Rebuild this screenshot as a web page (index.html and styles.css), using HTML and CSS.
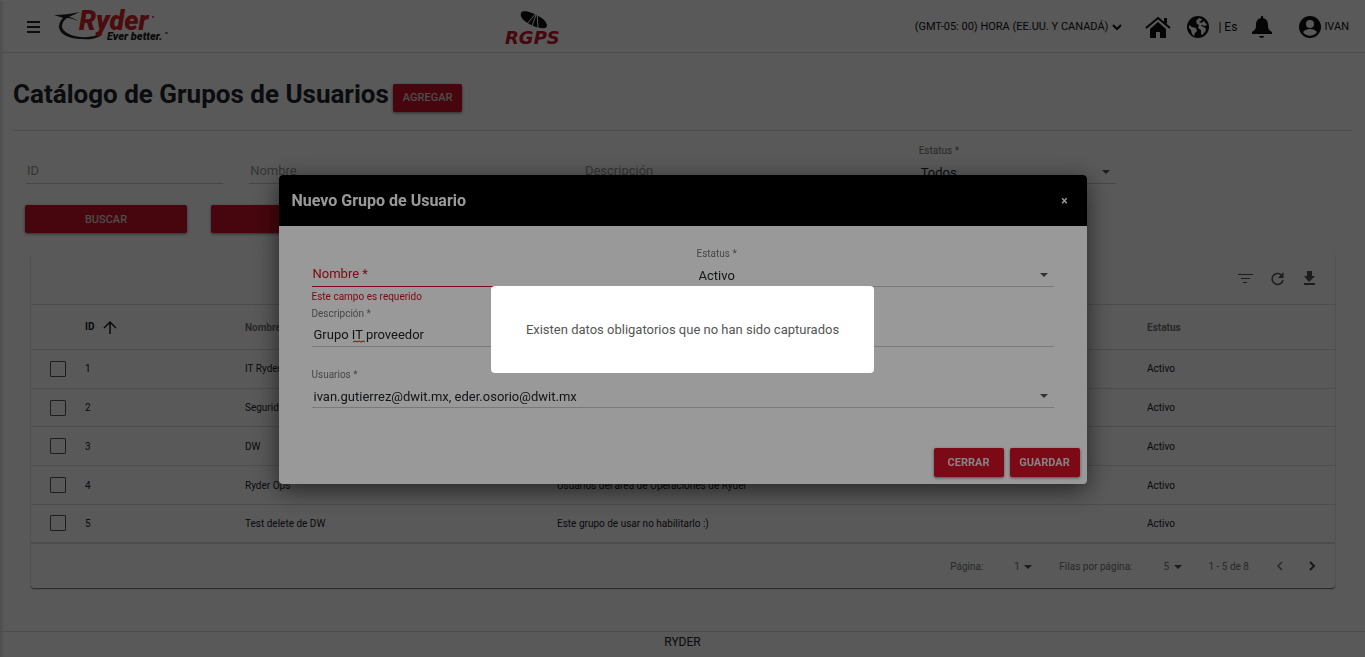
FILE: index.html
```
<!DOCTYPE html>
<html lang="es">
	<head>
		<meta charset="utf-8">
		<meta name="viewport" content="width=device-width, initial-scale=1">
		<title>RGPS - Grupos de Usuarios</title>
		<link rel="stylesheet" href="styles.css">
	</head>

	<body>
		<header class="topbar">
			<div class="brand">
				<button class="icon-btn" aria-label="Menú">
					<svg width="14" height="12" viewBox="0 0 14 12"><path d="M0 1h13M0 6h13M0 11h13" stroke="currentColor" stroke-width="2"/></svg>
				</button>
				<a href="#" aria-label="Ryder">
					<svg width="116" height="34" viewBox="0 0 116 34">
						<path d="M0 5C9 5 17 4 26 2c-5 2-9 4-11 5 4 1 7 2 9 4-4-2-8-3-11-3C6 13 6 20 15 24c8 4 20 4 29 1 2-1 4-2 4-1-2 4-12 6-20 5C9 29-1 19 9 8 7 7 3 6 0 5z" fill="#222"/>
						<text class="logo-ryder" x="25" y="20">Ryder</text>
						<circle cx="99" cy="7" r="1" fill="#d8232a"/>
						<text class="logo-tag" x="53" y="30">Ever better.</text>
						<path d="M111 23h3" stroke="#222"/>
					</svg>
				</a>
			</div>
			<a class="product" href="#">
				<svg width="60" height="36" viewBox="0 0 60 36">
					<path d="M16 4c1-4 12-1 19 4 7 4 9 10 5 11-5 1-13-2-19-6-4-3-6-6-5-9z" fill="#111"/>
					<path d="M32 3L22 15M32 3l-5 14M32 3l1 16" stroke="#fff" fill="none"/>
					<text class="logo-rgps" x="0" y="35">RGPS</text>
				</svg>
			</a>
			<nav class="tools">
				<button class="zone">(GMT-05: 00) HORA (EE.UU. Y CANADÁ)
					<svg width="12" height="8" viewBox="0 0 12 8"><path d="M2 2l4 4 4-4" stroke="currentColor" stroke-width="2" fill="none"/></svg>
				</button>
				<a class="home" href="#" aria-label="Inicio">
					<svg width="26" height="22" viewBox="0 0 26 22"><path d="M13 6l8 7v9h-6v-6h-4v6H5v-9z"/><path d="M1 12L13 2l12 10" fill="none" stroke="currentColor" stroke-width="2"/><path d="M19 2h3v6l-3-2z"/></svg>
				</a>
				<button class="lang">
					<svg width="22" height="22" viewBox="0 0 22 22"><circle cx="11" cy="11" r="11"/><path d="M12 2l3 1-1 2-2 1 2 1 3-2 3 4-2 1-3-1-1 1 3 1 2 2-1 3-3 3-1-1v-4l-3-2 1-3-2-1-1-3zM2 9l3 2 4 1 1 3-2 2-1 3-2-2-1-4-2-2z" fill="#fff"/></svg>
					<span>| Es</span>
				</button>
				<button class="bell" aria-label="Notificaciones">
					<svg width="20" height="22" viewBox="0 0 20 22"><path d="M9 0h2v2c4 1 5 4 5 7 0 4 1 5 4 7v2H0v-2c3-2 4-3 4-7 0-3 1-6 5-7zM7 20h5c0 1-1 2-2 2s-3-1-3-2z"/></svg>
				</button>
				<button class="user">
					<svg width="22" height="22" viewBox="0 0 22 22"><circle cx="11" cy="11" r="11"/><circle cx="11" cy="8" r="4" fill="#fff"/><path d="M4 16c3-4 11-4 14 0-3 5-11 5-14 0z" fill="#fff"/></svg>
					IVAN
				</button>
			</nav>
		</header>

		<main>
			<div class="title-row">
				<h1>Catálogo de Grupos de Usuarios</h1>
				<button class="btn">AGREGAR</button>
			</div>

			<form class="filters">
				<div class="field empty">
					<label for="f-id">ID</label>
					<input id="f-id" type="text">
				</div>
				<div class="field empty">
					<label for="f-nombre">Nombre</label>
					<input id="f-nombre" type="text">
				</div>
				<div class="field empty">
					<label for="f-desc">Descripción</label>
					<input id="f-desc" type="text">
				</div>
				<div class="field">
					<label for="f-estatus">Estatus *</label>
					<select id="f-estatus"><option>Todos</option></select>
					<i class="caret"></i>
				</div>
			</form>
			<div class="actions">
				<button class="btn">BUSCAR</button>
				<button class="btn wide">LIMPIAR</button>
			</div>

			<section class="card">
				<div class="card-tools">
					<button class="icon-btn" aria-label="Filtrar">
						<svg width="16" height="16" viewBox="0 0 16 16"><path d="M1 3.500h15M4 7.500h9M6 11.500h4" stroke="currentColor" stroke-width="1"/></svg>
					</button>
					<button class="icon-btn" aria-label="Actualizar">
						<svg width="16" height="16" viewBox="0 0 16 16"><path d="M12.500 4A5.500 5.500 0 1 0 14 9" stroke="currentColor" stroke-width="1.500" fill="none"/><path d="M14.500 1v6H9z"/></svg>
					</button>
					<button class="icon-btn" aria-label="Descargar">
						<svg width="16" height="16" viewBox="0 0 16 16"><path d="M6 0h5v5h3l-6 6-5-6h3zM3 12h11v2H3z"/></svg>
					</button>
				</div>
				<table>
					<thead>
						<tr>
							<th class="col-check"></th>
							<th class="col-id sorted">ID <svg width="14" height="14" viewBox="0 0 14 14"><path d="M7 14V2M1 8l6-6 6 6" stroke="currentColor" stroke-width="1.500" fill="none"/></svg></th>
							<th class="col-name">Nombre</th>
							<th>Descripción</th>
							<th class="col-status">Estatus</th>
						</tr>
					</thead>
					<tbody>
						<tr>
							<td><input type="checkbox" aria-label="Fila 1"></td>
							<td>1</td>
							<td>IT Ryder</td>
							<td></td>
							<td>Activo</td>
						</tr>
						<tr>
							<td><input type="checkbox" aria-label="Fila 2"></td>
							<td>2</td>
							<td>Seguridad</td>
							<td></td>
							<td>Activo</td>
						</tr>
						<tr>
							<td><input type="checkbox" aria-label="Fila 3"></td>
							<td>3</td>
							<td>DW</td>
							<td></td>
							<td>Activo</td>
						</tr>
						<tr>
							<td><input type="checkbox" aria-label="Fila 4"></td>
							<td>4</td>
							<td>Ryder Ops</td>
							<td>Usuarios del area de Operaciones de Ryder</td>
							<td>Activo</td>
						</tr>
						<tr>
							<td><input type="checkbox" aria-label="Fila 5"></td>
							<td>5</td>
							<td>Test delete de DW</td>
							<td>Este grupo de usar no habilitarlo :)</td>
							<td>Activo</td>
						</tr>
					</tbody>
				</table>
				<div class="pager">
					<label for="p-page">Página:</label>
					<span class="pick"><select id="p-page"><option>1</option></select><i class="caret"></i></span>
					<label for="p-rows">Filas por página:</label>
					<span class="pick"><select id="p-rows"><option>5</option></select><i class="caret"></i></span>
					<span class="range">1 - 5 de 8</span>
					<button class="icon-btn prev" aria-label="Anterior" disabled>
						<svg width="8" height="10" viewBox="0 0 8 10"><path d="M6 1L2 5l4 4" stroke="currentColor" stroke-width="1.500" fill="none"/></svg>
					</button>
					<button class="icon-btn next" aria-label="Siguiente">
						<svg width="8" height="10" viewBox="0 0 8 10"><path d="M2 1l4 4-4 4" stroke="currentColor" stroke-width="2" fill="none"/></svg>
					</button>
				</div>
			</section>
		</main>

		<footer>RYDER</footer>

		<div class="overlay">
			<div class="dialog" role="dialog" aria-labelledby="dlg-title">
				<div class="dialog-head">
					<h2 id="dlg-title">Nuevo Grupo de Usuario</h2>
					<button class="close" aria-label="Cerrar">×</button>
				</div>
				<form class="dialog-body">
					<div class="field empty error">
						<label for="g-nombre">Nombre *</label>
						<input id="g-nombre" type="text">
						<p>Este campo es requerido</p>
					</div>
					<div class="field">
						<label for="g-estatus">Estatus *</label>
						<select id="g-estatus"><option>Activo</option></select>
						<i class="caret"></i>
					</div>
					<div class="field full">
						<label for="g-desc">Descripción *</label>
						<input id="g-desc" type="text" value="Grupo IT proveedor">
						<svg class="typo" width="12" height="3" viewBox="0 0 12 3"><path d="M0 2l2-1 2 1 2-1 2 1 2-1 2 1" stroke="red" fill="none"/></svg>
					</div>
					<div class="field full">
						<label for="g-users">Usuarios *</label>
						<select id="g-users"><option>ivan.gutierrez@dwit.mx, eder.osorio@dwit.mx</option></select>
						<i class="caret"></i>
					</div>
				</form>
				<div class="dialog-actions">
					<button class="btn">CERRAR</button>
					<button class="btn">GUARDAR</button>
				</div>
			</div>
		</div>

		<div class="overlay alert">
			<div class="message" role="alert">Existen datos obligatorios que no han sido capturados</div>
		</div>
	</body>
</html>
```
FILE: styles.css
```
* {
	box-sizing: border-box;
}
html, body {
	height: 100%;
}
body {
	margin: 0;
	display: flex;
	flex-direction: column;
	overflow: hidden;
	background: white;
	color: #212529;
	font-family: Roboto, "Liberation Sans", sans-serif;
	font-size: 13px;
	box-shadow: inset 4px 0 4px -3px #ccc;
}
button, input, select {
	margin: 0;
	padding: 0;
	border: 0;
	background: none;
	color: inherit;
	font: inherit;
}
h1, h2, p {
	margin: 0;
}
a {
	color: inherit;
	text-decoration: none;
}
svg {
	display: block;
	overflow: visible;
	fill: currentColor;
}
.btn {
	height: 28px;
	padding: 0 10px;
	border-radius: 2px;
	background: #ce1126;
	color: #ddd;
	font-size: 11px;
	font-weight: 500;
	box-shadow: 0 1px 3px rgba(0, 0, 0, .5);
}

/* top bar */
.topbar {
	display: flex;
	align-items: center;
	height: 53px;
	flex: none;
	padding-right: 16px;
	border-top: solid 1px #fff;
	border-bottom: solid 1px #e0e0e0;
}
.brand {
	display: flex;
	align-items: center;
	gap: 13px;
	width: 37%;
	padding-left: 27px;
}
.logo-ryder {
	font-size: 27px;
	font-weight: 900;
	font-style: italic;
	fill: #d8232a;
}
.logo-tag {
	font-size: 11px;
	font-weight: 900;
	font-style: italic;
	fill: #222;
}
.product {
	margin-left: 6px;
}
.logo-rgps {
	font: italic bold 18px "DejaVu Sans", sans-serif;
	fill: #ce1126;
}
.tools {
	display: flex;
	align-items: center;
	margin-left: auto;
	color: #111;
}
.zone, .user {
	display: flex;
	align-items: center;
	gap: 3px;
	font-size: 11px;
}
.lang {
	display: flex;
	align-items: center;
	gap: 9px;
	font-size: 12px;
	margin: 0 15px 0 16px;
}
.home {
	margin-left: 22px;
}
.user {
	margin-left: 27px;
}

/* catalogue */
main {
	padding: 0 13px;
}
.title-row {
	display: flex;
	align-items: center;
	gap: 4px;
	height: 78px;
	padding-top: 12px;
	border-bottom: solid 1px #ddd;
}
h1 {
	font-size: 26px;
	font-weight: 700;
	line-height: 36px;
	margin-bottom: 8px;
}
.filters {
	display: grid;
	grid-template-columns: 2fr 3fr 3fr 2fr 2fr;
	padding-top: 12px;
}
.filters .field {
	margin: 0 13px;
}
.field {
	position: relative;
	display: grid;
	grid-template-rows: 16px 25px;
}
.field label {
	font-size: 10px;
	line-height: 16px;
	color: #777;
}
.field input, .field select {
	grid-area: 2 / 1;
	appearance: none;
	width: 100%;
	padding-left: 2px;
	border-bottom: solid 1px #ccc;
}
.field select {
	padding-top: 3px;
}
.field.empty label {
	grid-area: 2 / 1;
	padding-left: 1px;
	font-size: 13px;
	line-height: 24px;
	color: #999;
}
.caret {
	position: absolute;
	right: 6px;
	top: 27px;
	border: solid 4px transparent;
	border-top-color: #555;
	border-bottom: 0;
	pointer-events: none;
}
.actions {
	display: flex;
	gap: 24px;
	padding: 21px 12px;
}
.actions .btn {
	width: 162px;
}
.actions .wide {
	width: 348px;
}

/* table */
.card {
	margin: 0 17px 0 18px;
	border-radius: 3px;
	box-shadow: 0 1px 1px #777, 0 1px 2px #ddd;
}
.card-tools {
	display: flex;
	justify-content: flex-end;
	align-items: center;
	gap: 16px;
	height: 50px;
	padding-right: 18px;
	color: #555;
}
table {
	width: 100%;
	height: 238px;
	table-layout: fixed;
	border-collapse: collapse;
	font-size: 10px;
}
th, td {
	padding: 0;
	text-align: left;
	border-top: solid 1px #ddd;
}
th {
	height: 45px;
	color: #777;
	font-weight: 700;
}
.sorted {
	color: #222;
}
.sorted svg {
	display: inline-block;
	vertical-align: middle;
	margin-left: 6px;
}
.col-check {
	width: 54px;
}
.col-id {
	width: 160px;
}
.col-name {
	width: 312px;
}
.col-status {
	width: 188px;
}
td input {
	display: block;
	appearance: none;
	width: 16px;
	height: 16px;
	margin-left: 19px;
	border: solid 1px #555;
	border-radius: 1px;
}
.pager {
	display: flex;
	align-items: center;
	justify-content: flex-end;
	height: 46px;
	padding-right: 19px;
	border-top: solid 2px #ddd;
	font-size: 10px;
	color: #777;
}
.pick {
	position: relative;
	width: 18px;
	margin: 0 27px 0 31px;
}
.pick select {
	display: block;
	appearance: none;
	width: 100%;
}
.pick .caret {
	right: 0;
	top: 4px;
}
.range {
	margin-right: 27px;
}
.prev {
	margin-right: 24px;
}
.next {
	color: #444;
}
footer {
	margin-top: auto;
	height: 26px;
	border-top: solid 1px #ddd;
	line-height: 21px;
	font-size: 12px;
	text-align: center;
}

/* dialogs */
.overlay {
	position: fixed;
	inset: 0;
	display: grid;
	place-items: center;
	padding-top: 2px;
	background: rgba(0, 0, 0, .42);
}
.overlay.alert {
	background: rgba(0, 0, 0, .4);
}
.dialog {
	width: 808px;
	max-width: 100%;
	border-radius: 4px;
	overflow: hidden;
	background: #fff;
	box-shadow: 0 6px 24px rgba(0, 0, 0, .6);
}
.dialog-head {
	display: flex;
	align-items: center;
	justify-content: space-between;
	height: 51px;
	padding: 0 19px 0 13px;
	background: #000;
	color: #fff;
}
h2 {
	font-size: 16px;
	font-weight: 700;
}
.close {
	font-size: 12px;
	font-weight: 700;
}
.dialog-body {
	display: grid;
	grid-template-columns: 1fr 1fr;
	column-gap: 28px;
	padding: 20px 33px 0;
}
.full {
	grid-column: 1 / -1;
	margin-bottom: 20px;
}
.field p {
	grid-area: 3 / 1;
	font-size: 10px;
	line-height: 19px;
}
.field.error p, .field.error label {
	color: #ce1120;
}
.field.error input {
	border-color: #ce1120;
}
.typo {
	position: absolute;
	left: 41px;
	top: 34px;
}
.dialog-actions {
	display: flex;
	justify-content: flex-end;
	gap: 6px;
	padding: 20px 7px 7px;
}
.dialog-actions .btn {
	width: 70px;
	height: 29px;
	padding: 0;
	font-weight: 700;
}
.message {
	padding: 36px 35px;
	border-radius: 4px;
	background: #fff;
	color: #555;
	line-height: 15px;
}
```
